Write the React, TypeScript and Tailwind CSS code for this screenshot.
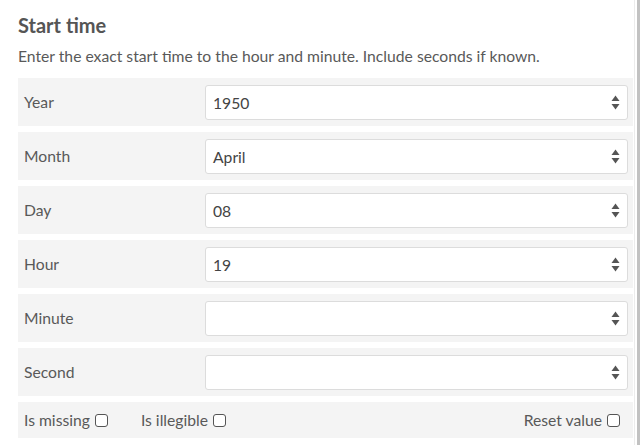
const rows = [
  { label: 'Year', value: '1950' },
  { label: 'Month', value: 'April' },
  { label: 'Day', value: '08' },
  { label: 'Hour', value: '19' },
  { label: 'Minute', value: '' },
  { label: 'Second', value: '' },
]

function SpinArrows() {
  return (
    <svg width="9" height="15" viewBox="0 0 9 15" className="shrink-0">
      <path d="M4.5 0.5 L8.5 6 L0.5 6 Z" fill="#555" />
      <path d="M4.5 14.5 L8.5 9 L0.5 9 Z" fill="#555" />
    </svg>
  )
}

function Box() {
  return <span className="inline-block h-[13px] w-[13px] rounded-[3px] border border-[#555] bg-white" />
}

export default function App() {
  return (
    <div className="flex h-[445px] w-[640px] bg-white font-['Lato','Noto_Sans',sans-serif] text-[#595959]">
      <div className="w-[635px] border-r border-[#ececec] pl-[18px] pr-[1px] pt-[12px]">
        <h2 className="text-[20px] font-bold leading-[26px] text-[#555]">Start time</h2>
        <p className="mt-[8px] text-[15.7px] leading-[20px]">
          Enter the exact start time to the hour and minute. Include seconds if known.
        </p>

        <div className="mt-[12px] flex flex-col gap-[6px]">
          {rows.map((r) => (
            <div key={r.label} className="flex h-[48px] items-center bg-[#f4f4f4] pl-[6px] pr-[5px]">
              <span className="w-[181px] shrink-0 pt-[2px] text-[15.7px]">{r.label}</span>
              <div className="flex h-[35px] flex-1 items-center justify-between rounded-[3px] border border-[#dcdcdc] bg-white pl-[7px] pr-[7px]">
                <span className="pt-[3px] text-[15.7px] text-[#444]">{r.value}</span>
                <SpinArrows />
              </div>
            </div>
          ))}

          <div className="flex h-[36px] items-center bg-[#f4f4f4] pl-[6px] pr-[13px] pt-[2px] text-[15.7px]">
            <label className="flex items-center gap-[5px]">
              Is missing <Box />
            </label>
            <label className="ml-[33px] flex items-center gap-[5px]">
              Is illegible <Box />
            </label>
            <label className="ml-auto flex items-center gap-[5px]">
              Reset value <Box />
            </label>
          </div>
        </div>
      </div>
      <div className="ml-[2px] w-[3px] bg-[#c2c2c2]" />
    </div>
  )
}
